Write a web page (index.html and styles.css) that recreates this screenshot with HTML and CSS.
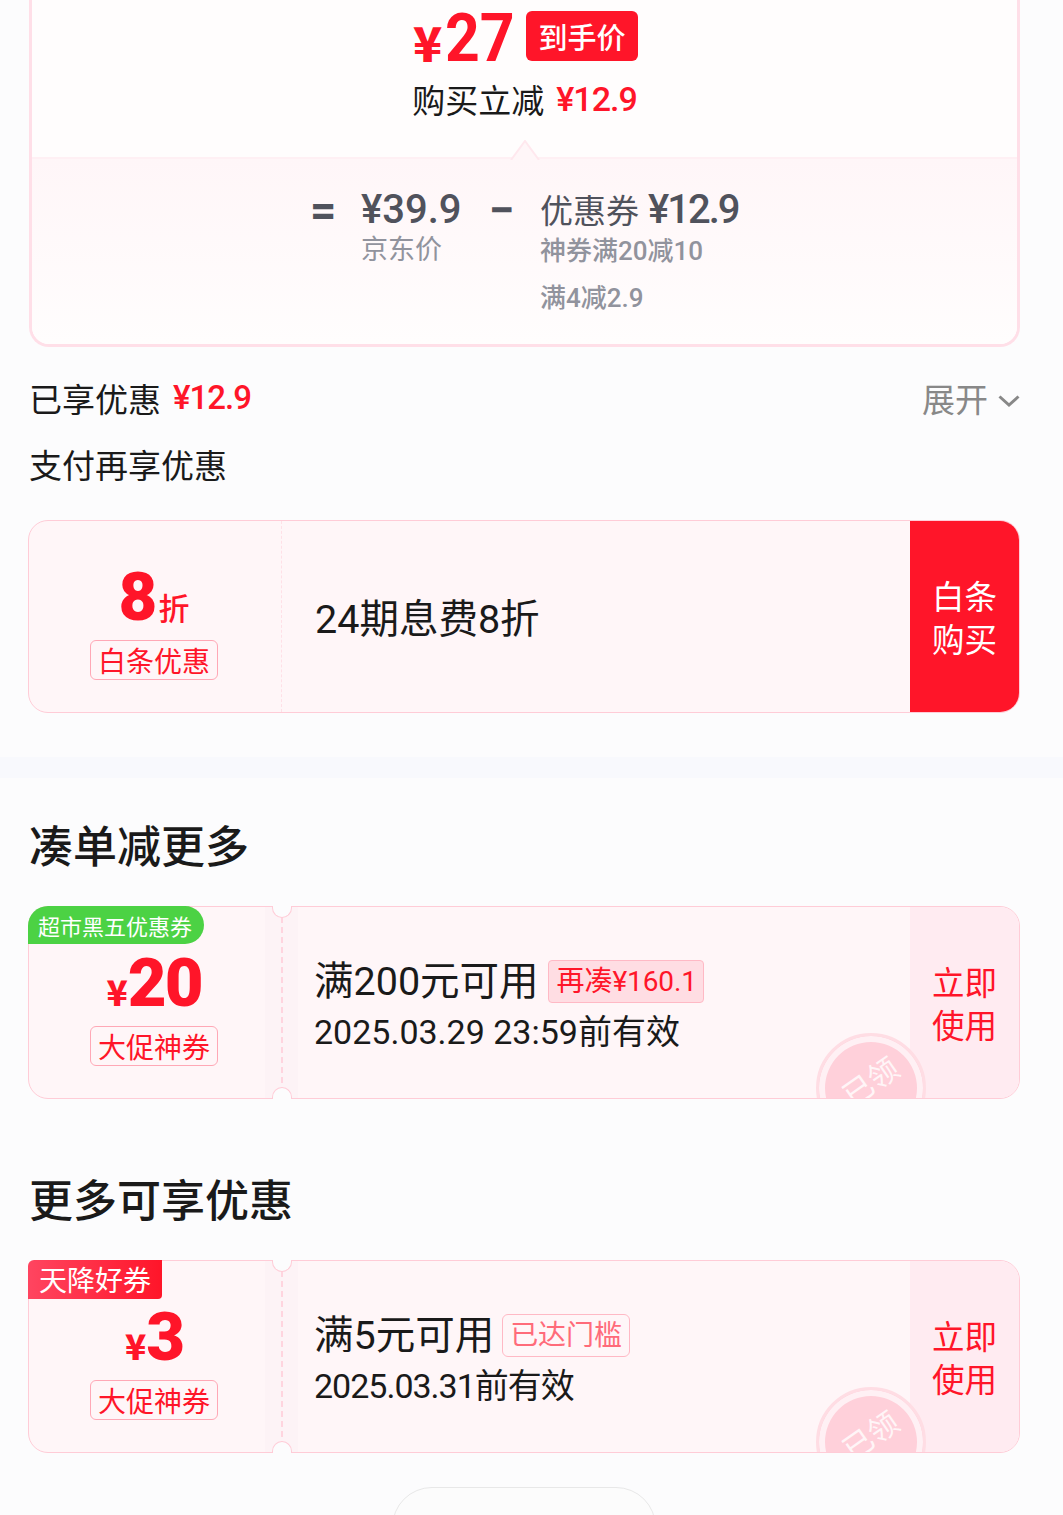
FILE: index.html
```html
<!DOCTYPE html>
<html lang="en">
<head>
    <meta charset="UTF-8">
    <meta name="viewport" content="width=device-width, initial-scale=1.0">
    <title>优惠明细</title>
    <link rel="stylesheet" href="styles.css">
</head>
<body>
    <section class="summary">
        <div class="summary-top">
            <div class="final-price">
                <span class="final-yen">¥</span><span class="final-num">27</span>
                <span class="final-tag">到手价</span>
            </div>
            <div class="instant-cut">购买立减<span class="instant-num">¥12.9</span></div>
        </div>
        <div class="summary-bottom">
            <svg class="arrow" width="30" height="20" viewBox="0 0 30 20"><path d="M1 20 L15 1 L29 20" fill="#fff6f8" stroke="#ffe8ee" stroke-width="2"/></svg>
            <div class="formula">
                <div class="op">=</div>
                <div class="term term-price">
                    <div class="term-main">¥39.9</div>
                    <div class="term-sub">京东价</div>
                </div>
                <div class="op op-minus">−</div>
                <div class="term">
                    <div class="term-main"><span class="term-word">优惠券</span><span class="term-cut">¥12.9</span></div>
                    <div class="term-sub">神券满20减10</div>
                    <div class="term-sub term-sub-next">满4减2.9</div>
                </div>
            </div>
        </div>
    </section>

    <div class="saved-row">
        <div class="saved-label">已享优惠<span class="saved-num">¥12.9</span></div>
        <div class="expand">展开
            <svg class="expand-icon" width="22" height="12" viewBox="0 0 22 12"><path d="M1.500 1.500 L11 10 L20.500 1.500" fill="none" stroke="#888" stroke-width="3"/></svg>
        </div>
    </div>
    <div class="pay-title">支付再享优惠</div>

    <div class="ticket ticket-pay">
        <div class="coupon coupon-plain">
            <div class="coupon-left">
                <div class="amount amount-discount"><span class="amount-num">8</span><span class="amount-unit">折</span></div>
                <div class="coupon-type">白条优惠</div>
            </div>
            <div class="coupon-mid">
                <div class="coupon-name">24期息费8折</div>
            </div>
            <div class="coupon-action coupon-action-solid">白条<br>购买</div>
        </div>
    </div>

    <div class="band"></div>

    <h2 class="section-title first">凑单减更多</h2>
    <div class="ticket">
        <div class="coupon">
            <div class="coupon-left">
                <div class="amount"><span class="amount-yen">¥</span><span class="amount-num">20</span></div>
                <div class="coupon-type">大促神券</div>
            </div>
            <div class="perforation"></div>
            <div class="coupon-mid">
                <div class="coupon-name">满200元可用<span class="hint hint-fill">再凑¥160.1</span></div>
                <div class="coupon-date">2025.03.29 23:59前有效</div>
            </div>
            <div class="coupon-action">立即<br>使用</div>
            <div class="stamp"><span class="stamp-text">已领</span></div>
        </div>
        <div class="corner corner-green">超市黑五优惠券</div>
        <span class="notch notch-top"></span>
        <span class="notch notch-bottom"></span>
    </div>

    <h2 class="section-title">更多可享优惠</h2>
    <div class="ticket">
        <div class="coupon">
            <div class="coupon-left">
                <div class="amount"><span class="amount-yen">¥</span><span class="amount-num">3</span></div>
                <div class="coupon-type">大促神券</div>
            </div>
            <div class="perforation"></div>
            <div class="coupon-mid">
                <div class="coupon-name">满5元可用<span class="hint hint-line">已达门槛</span></div>
                <div class="coupon-date coupon-date-short">2025.03.31前有效</div>
            </div>
            <div class="coupon-action">立即<br>使用</div>
            <div class="stamp"><span class="stamp-text">已领</span></div>
        </div>
        <div class="corner corner-red">天降好券</div>
        <span class="notch notch-top"></span>
        <span class="notch notch-bottom"></span>
    </div>

    <div class="bottom-btn"></div>
</body>
</html>
```
FILE: styles.css
```css
html, body {
    height: 1515px;
    overflow: hidden;
}
body {
    margin: 0;
    background: #fcfcfd;
    color: #1a1a1a;
    font-family: 'Roboto', 'Noto Sans CJK SC', sans-serif;
}

/* top card */
.summary {
    margin: 0 43px 0 29px;
    height: 347px;
    box-sizing: border-box;
    border: 3px solid #ffdfe8;
    border-top: none;
    border-radius: 0 0 20px 20px;
    overflow: hidden;
    background: #fffdfd;
}
.summary-top {
    height: 157px;
    box-sizing: border-box;
    padding-top: 11px;
    text-align: center;
}
.final-price {
    display: flex;
    justify-content: center;
    align-items: flex-start;
    height: 50px;
    padding-left: 2px;
    color: #ff1529;
}
.final-yen {
    font-family: 'Noto Sans CJK SC', sans-serif;
    font-size: 48px;
    font-weight: 900;
    line-height: 60px;
}
.final-num {
    font-size: 66px;
    font-weight: 700;
    line-height: 56px;
    margin-left: 3px;
    width: 68px;
    transform: scaleX(0.92);
    transform-origin: left;
}
.final-tag {
    margin-left: 13px;
    width: 112px;
    height: 50px;
    line-height: 50px;
    border-radius: 6px;
    background: #ff1529;
    color: #fff;
    font-family: 'Noto Sans CJK SC', sans-serif;
    font-size: 29px;
    font-weight: 500;
}
.instant-cut {
    display: flex;
    justify-content: center;
    margin-top: 16px;
    font-family: 'Noto Sans CJK SC', sans-serif;
    font-size: 33px;
    line-height: 44px;
}
.instant-num {
    margin-left: 12px;
    color: #ff1529;
    font-family: 'Roboto', 'Noto Sans CJK SC', sans-serif;
    font-size: 34px;
    font-weight: 500;
    letter-spacing: -1px;
}
.summary-bottom {
    position: relative;
    height: 187px;
    box-sizing: border-box;
    border-top: 2px solid #fff0f4;
    background: linear-gradient(#fff6f8, #fffdfd);
}
.arrow {
    position: absolute;
    left: 478px;
    top: -19px;
}
.formula {
    display: flex;
    padding: 29px 0 0 278px;
}
.op {
    width: 51px;
    color: #50525c;
    font-size: 46px;
    font-weight: 700;
    line-height: 44px;
}
.term-price {
    width: 128px;
}
.term-main {
    color: #50525c;
    font-size: 40px;
    font-weight: 500;
    line-height: 43px;
    white-space: nowrap;
}
.term-word {
    font-size: 33px;
    font-weight: 400;
    margin-right: 9px;
}
.term-cut {
    letter-spacing: -2px;
}
.term-sub {
    color: #91939d;
    font-size: 26px;
    font-weight: 500;
    line-height: 36px;
    white-space: nowrap;
}
.term-price .term-sub {
    font-size: 27px;
    font-weight: 400;
    padding-top: 1px;
}
.term-sub-next {
    margin-top: 11px;
}

/* rows under the card */
.saved-row {
    display: flex;
    justify-content: space-between;
    align-items: center;
    margin: 28px 43px 0 29px;
    height: 46px;
}
.saved-label {
    font-family: 'Noto Sans CJK SC', sans-serif;
    font-size: 33px;
    line-height: 46px;
    display: flex;
}
.saved-num {
    margin-left: 12px;
    color: #ff1529;
    font-family: 'Roboto', 'Noto Sans CJK SC', sans-serif;
    font-size: 33px;
    font-weight: 500;
    letter-spacing: -1px;
}
.expand {
    display: flex;
    align-items: center;
    color: #888;
    font-family: 'Noto Sans CJK SC', sans-serif;
    font-size: 33px;
}
.expand-icon {
    margin: 6px 0 0 10px;
}
.pay-title {
    margin: 20px 0 0 29px;
    font-family: 'Noto Sans CJK SC', sans-serif;
    font-size: 33px;
    line-height: 46px;
}

/* coupons */
.ticket {
    position: relative;
    margin: 0 43px 0 28px;
}
.ticket-pay {
    margin-top: 33px;
}
.coupon {
    position: relative;
    display: flex;
    height: 193px;
    box-sizing: border-box;
    border: 1px solid #ffccd7;
    border-radius: 20px;
    overflow: hidden;
    background: #fff6f8;
}
.coupon-left {
    width: 252px;
    flex: none;
    display: flex;
    flex-direction: column;
    align-items: center;
    box-sizing: border-box;
    padding: 45px 2px 0 0;
}
.coupon-plain .coupon-left {
    border-right: 1px dashed #ffe0e7;
    width: 253px;
}
.amount {
    display: flex;
    align-items: baseline;
    height: 74px;
    color: #ff1529;
}
.amount-yen {
    font-family: 'Noto Sans CJK SC', sans-serif;
    font-size: 35px;
    font-weight: 900;
    line-height: 62px;
}
.amount-num {
    font-size: 67px;
    font-weight: 900;
    line-height: 62px;
    letter-spacing: -2px;
}
.amount-unit {
    margin-left: 3px;
    font-family: 'Noto Sans CJK SC', sans-serif;
    font-size: 31px;
    font-weight: 500;
}
.coupon-type {
    box-sizing: border-box;
    width: 128px;
    height: 40px;
    border: 1px solid #ffa8b6;
    border-radius: 6px;
    color: #ff1529;
    font-family: 'Noto Sans CJK SC', sans-serif;
    font-size: 28px;
    line-height: 38px;
    text-align: center;
    white-space: nowrap;
}
.perforation {
    position: absolute;
    left: 236px;
    top: 0;
    bottom: 0;
    width: 33px;
    background: #fdf3f6;
}
.perforation::before {
    content: '';
    position: absolute;
    left: 16px;
    top: 0;
    bottom: 0;
    width: 2px;
    background: repeating-linear-gradient(#ffd5df 0 6px, transparent 6px 10px);
}
.notch {
    position: absolute;
    left: 244px;
    width: 20px;
    height: 12px;
    box-sizing: border-box;
    border: 1px solid #ffccd7;
    background: #fcfcfd;
}
.notch-top {
    top: 0;
    border-top: none;
    border-radius: 0 0 10px 10px;
}
.notch-bottom {
    bottom: 0;
    border-bottom: none;
    border-radius: 10px 10px 0 0;
}
.coupon-mid {
    flex: 1;
    padding: 8px 0 0 33px;
    display: flex;
    flex-direction: column;
    justify-content: center;
}
.coupon-name {
    display: flex;
    align-items: center;
    font-size: 39.500px;
    line-height: 50px;
    white-space: nowrap;
}
.coupon-date {
    font-size: 34px;
    line-height: 50px;
    white-space: nowrap;
}
.coupon-date-short {
    letter-spacing: -1px;
}
.coupon-plain .coupon-mid {
    padding-top: 6px;
}
.hint {
    box-sizing: border-box;
    height: 43px;
    line-height: 41px;
    margin-left: 9px;
    padding: 0 6px 0 8px;
    border-radius: 4px;
    font-size: 28px;
    letter-spacing: -0.100px;
}
.hint-fill {
    background: #ffdde3;
    border: 1px solid #ffb9c5;
    color: #ff1529;
}
.hint-line {
    margin-left: 8px;
    border: 1px solid #ffb9c5;
    border-radius: 6px;
    color: #ff6b7a;
    padding: 0 7px;
}
.coupon-action {
    width: 109px;
    flex: none;
    box-sizing: border-box;
    padding-bottom: 2px;
    display: flex;
    align-items: center;
    justify-content: center;
    text-align: center;
    background: #ffebf1;
    color: #ff1529;
    font-family: 'Noto Sans CJK SC', sans-serif;
    font-size: 32.500px;
    line-height: 43px;
}
.coupon-action-solid {
    background: #ff1529;
    color: #fff;
}
.corner {
    position: absolute;
    left: 0;
    top: 0;
    color: #fff;
    white-space: nowrap;
    font-family: 'Noto Sans CJK SC', sans-serif;
}
.corner-green {
    height: 38px;
    padding: 0 12px 0 10px;
    background: #4cd244;
    border-radius: 20px 19px 19px 0;
    font-size: 22px;
    line-height: 38px;
}
.corner-red {
    height: 39px;
    padding: 0 11px;
    background: linear-gradient(90deg, #ff4560, #ff1529);
    border-radius: 6px 0 4px 0;
    font-size: 28px;
    line-height: 38px;
}
.stamp {
    position: absolute;
    left: 787px;
    top: 126px;
    width: 110px;
    height: 110px;
    box-sizing: border-box;
    border: 3px solid #ffdde4;
    border-radius: 50%;
    background: #ffd0da;
    box-shadow: inset 0 0 0 6px #fff0f4;
    text-align: center;
}
.stamp-text {
    display: block;
    color: #fff5f7;
    font-family: 'Noto Sans CJK SC', sans-serif;
    font-size: 30px;
    line-height: 40px;
    margin: 24px 0 0 -3px;
    transform: rotate(-35deg);
}

.band {
    height: 21px;
    margin-top: 44px;
    background: #f8f9fd;
}
.section-title {
    margin: 71px 0 0 29px;
    font-family: 'Noto Sans CJK SC', sans-serif;
    font-size: 44px;
    font-weight: 500;
    line-height: 56px;
}
.section-title.first {
    margin-top: 38px;
}
.section-title + .ticket {
    margin-top: 34px;
}
.bottom-btn {
    width: 264px;
    height: 80px;
    margin: 34px 0 0 392px;
    box-sizing: border-box;
    border: 1px solid #e8e8e8;
    border-radius: 40px;
    background: #fcfcfc;
}
```
